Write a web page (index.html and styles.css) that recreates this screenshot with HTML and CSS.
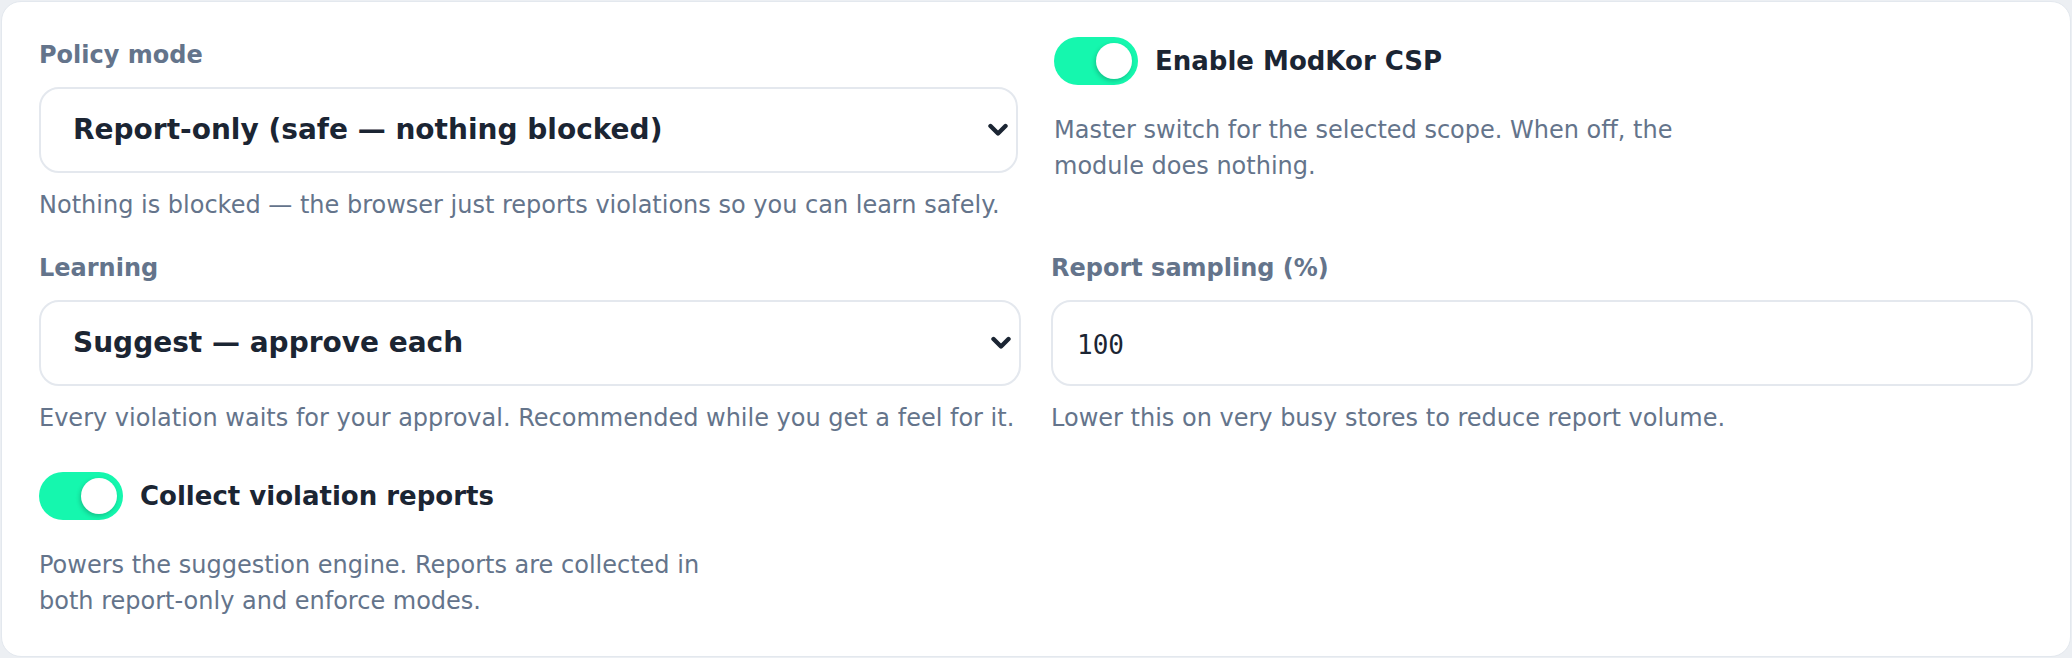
FILE: index.html
```html
<!DOCTYPE html>
<html lang="en">
<head>
<meta charset="utf-8">
<title>ModKor CSP settings</title>
<link rel="stylesheet" href="styles.css">
</head>
<body>
<div class="card">
  <div class="grid grid-top">
    <div class="field">
      <label class="label">Policy mode</label>
      <div class="select-wrap">
        <select class="select"><option>Report-only (safe — nothing blocked)</option></select>
        <svg class="chevron" viewBox="0 0 20 14" width="20" height="14"><polyline points="2.5,3 10,10.5 17.5,3" fill="none" stroke="#1b2533" stroke-width="4.4" stroke-linecap="round" stroke-linejoin="round"/></svg>
      </div>
      <p class="help">Nothing is blocked — the browser just reports violations so you can learn safely.</p>
    </div>
    <div class="field">
      <div class="toggle-row">
        <span class="switch"><span class="knob"></span></span>
        <span class="toggle-label">Enable ModKor CSP</span>
      </div>
      <p class="help help-toggle">Master switch for the selected scope. When off, the module does nothing.</p>
    </div>
  </div>

  <div class="grid grid-mid">
    <div class="field">
      <label class="label">Learning</label>
      <div class="select-wrap">
        <select class="select"><option>Suggest — approve each</option></select>
        <svg class="chevron" viewBox="0 0 20 14" width="20" height="14"><polyline points="2.5,3 10,10.5 17.5,3" fill="none" stroke="#1b2533" stroke-width="4.4" stroke-linecap="round" stroke-linejoin="round"/></svg>
      </div>
      <p class="help">Every violation waits for your approval. Recommended while you get a feel for it.</p>
    </div>
    <div class="field">
      <label class="label">Report sampling (%)</label>
      <input class="input" type="text" value="100">
      <p class="help">Lower this on very busy stores to reduce report volume.</p>
    </div>
  </div>

  <div class="field field-bottom">
    <div class="toggle-row">
      <span class="switch"><span class="knob"></span></span>
      <span class="toggle-label">Collect violation reports</span>
    </div>
    <p class="help help-toggle">Powers the suggestion engine. Reports are collected in both report-only and enforce modes.</p>
  </div>
</div>
</body>
</html>
```

FILE: styles.css
```css
* { box-sizing: border-box; }

html, body {
  margin: 0;
  padding: 0;
}

body {
  padding: 1px;
  background: #eceff3;
  font-family: "DejaVu Sans", "Liberation Sans", sans-serif;
}

.card {
  height: calc(100vh - 2px);
  background: #ffffff;
  border: 1px solid #e3e8ee;
  border-radius: 20px;
  padding: 35px 37px;
}

.grid {
  display: grid;
  grid-template-columns: 1fr 1fr;
}

.grid-top {
  column-gap: 36px;
}

.grid-mid {
  column-gap: 30px;
  margin-top: 27px;
}

.field {
  display: flex;
  flex-direction: column;
  min-width: 0;
}

.field-bottom {
  margin-top: 36px;
}

.label {
  font-size: 24px;
  line-height: 36px;
  font-weight: bold;
  color: #64748b;
  margin-bottom: 14px;
}

.select-wrap {
  position: relative;
}

.select {
  display: block;
  width: 100%;
  height: 86px;
  -webkit-appearance: none;
  appearance: none;
  background: #ffffff;
  border: 2px solid #e4e8ee;
  border-radius: 20px;
  padding: 0 48px 2px 32px;
  font-family: "DejaVu Sans", "Liberation Sans", sans-serif;
  font-size: 28px;
  font-weight: bold;
  color: #1b2533;
  outline: none;
}

.chevron {
  position: absolute;
  right: 10px;
  top: 50%;
  margin-top: -7px;
  pointer-events: none;
}

.input {
  display: block;
  width: 100%;
  height: 86px;
  background: #ffffff;
  border: 2px solid #e4e8ee;
  border-radius: 20px;
  padding: 4px 24px 0;
  font-family: "DejaVu Sans Mono", "Liberation Mono", monospace;
  font-size: 26px;
  color: #1b2533;
  outline: none;
}

.help {
  margin: 14px 0 0;
  font-size: 24px;
  line-height: 36px;
  color: #64748b;
}

.help-toggle {
  margin-top: 27px;
  max-width: 700px;
}

.toggle-row {
  display: flex;
  align-items: center;
  gap: 17px;
}

.switch {
  position: relative;
  flex: none;
  width: 84px;
  height: 48px;
  border-radius: 24px;
  background: #15f7ae;
}

.knob {
  position: absolute;
  top: 6px;
  right: 6px;
  width: 36px;
  height: 36px;
  border-radius: 50%;
  background: #ffffff;
  box-shadow: -1px 2px 4px rgba(15, 40, 30, 0.25);
}

.toggle-label {
  font-size: 26px;
  line-height: 36px;
  font-weight: bold;
  color: #1b2533;
}
```
